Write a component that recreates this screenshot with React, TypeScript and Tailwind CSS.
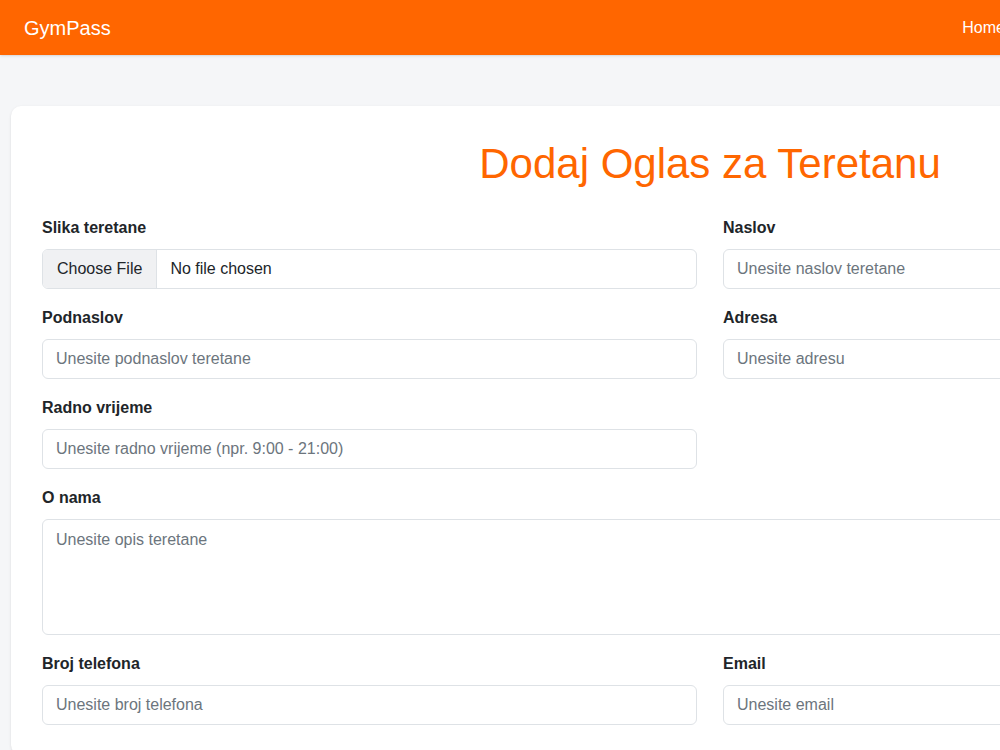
import React from 'react';

const inputCls =
  'w-full h-[40px] px-[13px] rounded-[6px] border border-[#dee2e6] bg-white text-[16px] text-[#212529] placeholder-[#6c757d] outline-none';

const Field = ({ label, placeholder }: { label: string; placeholder: string }) => (
  <div>
    <label className="block font-bold text-[16px] text-[#212529] mb-[10px] leading-[22px]">{label}</label>
    <input placeholder={placeholder} className={inputCls} />
  </div>
);

export default function App() {
  return (
    <div className="min-h-[750px] bg-[#f5f6f8] w-[1420px]" style={{ fontFamily: '"Liberation Sans", Arial, sans-serif' }}>
      <nav className="h-[55px] bg-[#ff6600] flex items-center justify-between px-[24px] shadow">
        <span className="text-white text-[20px]">GymPass</span>
        <span className="text-white text-[16px] mr-[391px]">Home</span>
      </nav>
      <div className="pt-[51px] pl-[11px]">
        <div className="w-[1398px] bg-white rounded-[10px] shadow-sm px-[31px] pt-[33px] pb-[30px]">
          <h1 className="text-center text-[#ff6600] text-[42px] leading-[50px] mb-[28px]">Dodaj Oglas za Teretanu</h1>
          <div className="grid grid-cols-2 gap-x-[26px] gap-y-[18px]">
            <div>
              <label className="block font-bold text-[16px] text-[#212529] mb-[10px] leading-[22px]">Slika teretane</label>
              <div className="flex h-[40px] rounded-[6px] border border-[#dee2e6] overflow-hidden text-[16px] text-[#212529]">
                <span className="bg-[#f0f1f3] border-r border-[#dee2e6] px-[14px] flex items-center">Choose File</span>
                <span className="px-[13px] flex items-center">No file chosen</span>
              </div>
            </div>
            <Field label="Naslov" placeholder="Unesite naslov teretane" />
            <Field label="Podnaslov" placeholder="Unesite podnaslov teretane" />
            <Field label="Adresa" placeholder="Unesite adresu" />
            <Field label="Radno vrijeme" placeholder="Unesite radno vrijeme (npr. 9:00 - 21:00)" />
            <div />
            <div className="col-span-2">
              <label className="block font-bold text-[16px] text-[#212529] mb-[10px] leading-[22px]">O nama</label>
              <textarea
                placeholder="Unesite opis teretane"
                className="w-full h-[116px] px-[13px] py-[8px] rounded-[6px] border border-[#dee2e6] text-[16px] placeholder-[#6c757d] outline-none resize-none block"
              />
            </div>
            <Field label="Broj telefona" placeholder="Unesite broj telefona" />
            <Field label="Email" placeholder="Unesite email" />
          </div>
        </div>
      </div>
    </div>
  );
}
